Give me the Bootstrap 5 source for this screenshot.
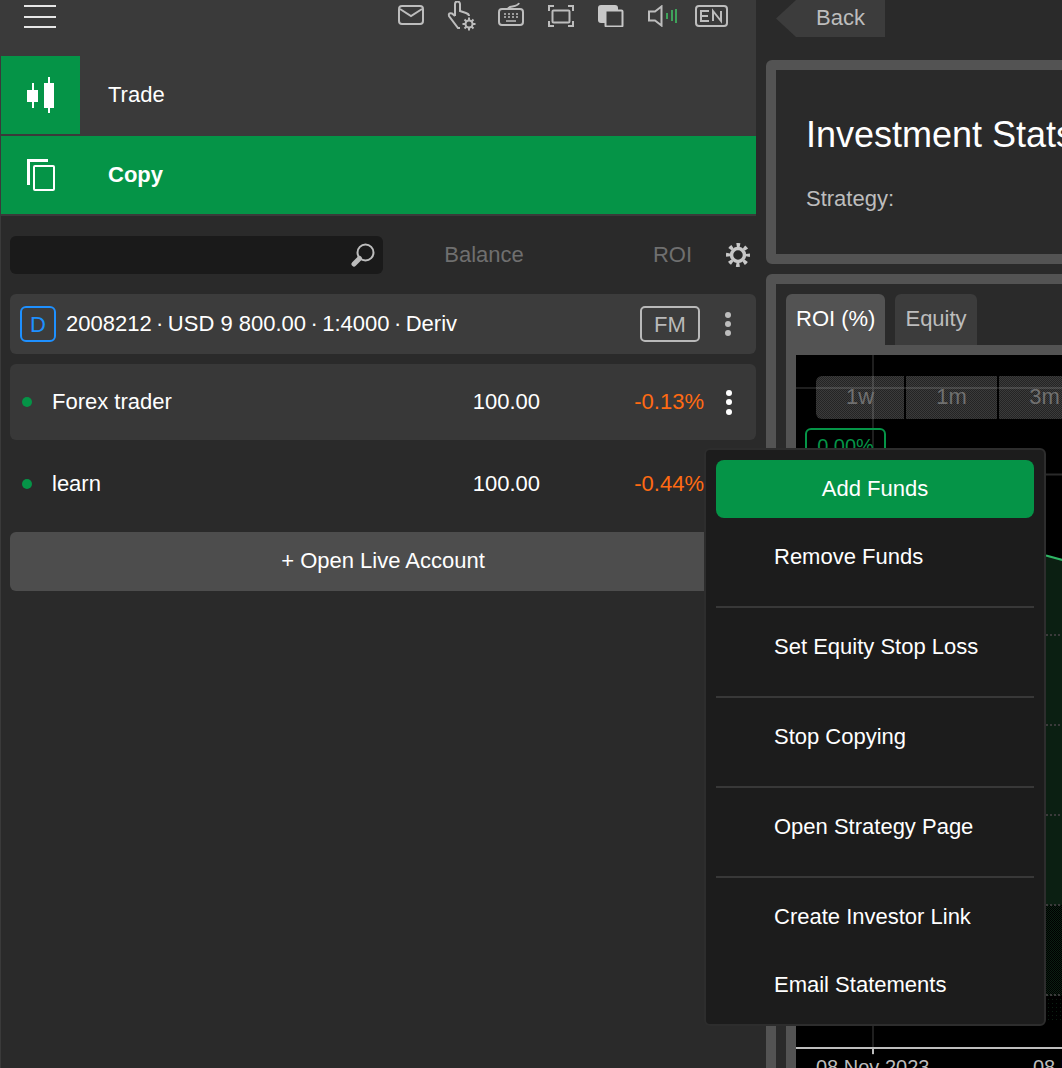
<!DOCTYPE html>
<html lang="en">
<head>
    <meta charset="UTF-8">
    <meta name="viewport" content="width=device-width, initial-scale=1.0">
    <title>Investment Stats</title>
    <link href="https://cdn.jsdelivr.net/npm/bootstrap@5.3.0/dist/css/bootstrap.min.css" rel="stylesheet">
    <style>
        html, body { height: 100%; }
        body {
            background: #2a2a2a;
            font-family: "Liberation Sans", Arial, sans-serif;
            font-size: 22px;
            color: #fff;
            overflow: hidden;
        }
        .app-shell { position: relative; height: 1068px; width: 1062px; overflow: hidden; }
        .lift-text { padding-bottom: 2px; }

        /* left column */
        .side-panel { width: 756px; flex: none; border-left: 1px solid #3a3a3a; }
        .top-bar { height: 56px; background: #3a3a3a; padding: 5px 28px 0 23px; }
        .burger { width: 32px; display: flex; flex-direction: column; gap: 8.5px; }
        .burger span { height: 2px; background: #e6e6e6; }
        .ico-hand { margin: -4px 0 0 23px; }
        .ico-keys { margin: -3px 0 0 22px; }
        .ico-screen { margin-left: 24px; }
        .ico-windows { margin-left: 24px; }
        .ico-sound { margin-left: 24px; }
        .ico-lang { margin-left: 18px; }
        .nav-row { height: 78px; background: #3a3a3a; font-size: 22px; }
        .nav-row.trade-row { height: 80px; padding-bottom: 2px; }
        .nav-ico { width: 79px; height: 78px; }
        .nav-label { margin-left: 28px; }
        .green-fill { background: #059447; }
        .copy-rule { height: 2px; background: #3a3a3a; }

        .tools-row { padding: 20px 5px 0 9px; height: 58px; }
        .search-box { width: 373px; height: 38px; background: #1a1a1a; border-radius: 6px; padding-right: 8px; }
        .col-head { color: #6f6f6f; }
        .head-balance { width: 202px; text-align: center; }
        .head-roi { width: 107px; text-align: right; }
        .tools-gear { margin-left: 34px; }

        .acc-row { margin: 20px 0 0 9px; height: 60px; background: #3c3c3c; border-radius: 6px; padding: 0 10px; }
        .acc-d { width: 36px; height: 36px; border: 2px solid #1e90ff; border-radius: 6px; color: #1e90ff; margin-right: 10px; }
        .acc-sep { margin: 0 -1.7px; }
        .acc-fm { width: 60px; height: 36px; border: 2px solid #b9b9b9; border-radius: 5px; color: #b9b9b9; }
        .kebab { display: flex; flex-direction: column; gap: 3.5px; width: 6px; }
        .kebab span { width: 6px; height: 6px; border-radius: 50%; background: #bdbdbd; }
        .kebab.bright span { background: #fff; }
        .acc-kebab { gap: 3px; margin-left: 25px; margin-right: 15px; }

        .copy-item { margin: 10px 0 0 9px; height: 76px; border-radius: 6px; padding: 0 0 0 12px; }
        .copy-item.active-item { background: #383838; }
        .copy-item + .copy-item { margin-top: 6px; }
        .status-dot { width: 10px; height: 10px; border-radius: 50%; background: #059447; margin-right: 20px; flex: none; }
        .item-name { width: 330px; }
        .item-bal { width: 158px; text-align: right; }
        .item-roi { width: 164px; text-align: right; color: #ff6a13; }
        .item-menu { margin-left: 22px; }

        .open-live { display: block; width: 746px; height: 59px; margin: 10px 0 0 9px; background: #4d4d4d; color: #fff; font-size: 22px; border: 0; border-radius: 6px; padding: 0 0 2px; }

        /* right column */
        .main-col { margin-left: 10px; width: 296px; flex: none; overflow: hidden; }
        .main-inner { width: 700px; }
        .back-tag { width: 109px; height: 37px; margin-left: 10px; background: #3c3c3c; color: #bdbdbd; padding-left: 40px; clip-path: polygon(20px 0, 100% 0, 100% 100%, 20px 100%, 0 50%); line-height: 35px; }
        .stat-box { border: 10px solid #535353; border-radius: 6px; background: #2a2a2a; }
        .stats-head { margin-top: 23px; height: 204px; padding: 0 30px; }
        .stats-head h1 { font-size: 36px; font-weight: 400; margin: 44px 0 0; line-height: 42px; }
        .strategy-label { color: #bdbdbd; margin-top: 26px; }
        .chart-box { margin-top: 10px; height: 900px; padding: 10px; }
        .tab-btn { height: 51px; padding: 0 10px; line-height: 50px; background: #3c3c3c; color: #bdbdbd; border-radius: 6px 6px 0 0; }
        .tab-btn.on { background: #535353; color: #fff; }
        .tab-gap { gap: 10px; }
        .plot-frame { border: 10px solid #535353; border-right: 0; height: 800px; background: #000; position: relative; }
        .plot-svg { position: absolute; left: 0; top: 0; }
        .range-row { position: absolute; left: 20px; top: 21px; gap: 2px; }
        .range-btn {
            width: 91px; height: 43px; color: #707070; text-align: center; line-height: 42px;
            background-image: conic-gradient(rgba(255,255,255,.23) 25%, rgba(255,255,255,.14) 0 50%, rgba(255,255,255,.23) 0 75%, rgba(255,255,255,.14) 0);
            background-size: 2px 2px;
        }
        .range-btn:first-child { width: 88px; border-radius: 6px 0 0 6px; }
        .pct-tag { position: absolute; left: 9px; top: 73px; width: 81px; height: 40px; border: 2px solid #059447; border-radius: 6px; color: #059447; font-size: 20px; text-align: center; line-height: 33px; }
        .date-tick { position: absolute; top: 697px; color: #bdbdbd; font-size: 20px; }
        .date-first { left: 20px; }
        .date-second { left: 237px; }

        /* popup menu */
        .acc-menu.dropdown-menu {
            left: 704px; top: 448px; width: 342px; height: 578px;
            background: #1c1c1c; border: 2px solid #2d2d2d; border-radius: 6px;
            padding: 10px; font-size: 22px; --bs-dropdown-min-width: 0;
        }
        .acc-menu .dropdown-item { height: 58px; padding: 0 0 0 58px; color: #fff; line-height: 58px; border-radius: 8px; }
        .acc-menu .dropdown-item.green-fill { background: #059447; padding: 0; text-align: center; margin-bottom: 10px; }
        .acc-menu .dropdown-divider { height: 2px; margin: 20px 0 10px; border: 0; background: #383838; opacity: 1; }
        .acc-menu .plain-next { margin-top: 10px; }
    </style>
</head>
<body>
<div class="app-shell d-flex">
    <div class="side-panel">
        <div class="top-bar d-flex justify-content-between">
            <div class="burger"><span></span><span></span><span></span></div>
            <div class="d-flex align-items-start">
                <svg width="26" height="20" viewBox="0 0 26 20" fill="none" stroke="#bdbdbd" stroke-width="2"><rect x="1" y="1" width="24" height="18" rx="3"/><path d="M2 4l11 7 11-7"/></svg>
                <svg class="ico-hand" width="29" height="30" viewBox="0 0 29 30" fill="none" stroke="#bdbdbd" stroke-width="2"><path d="M8 15V3a2.500 2.500 0 0 1 5 0V10l6 2q3 1 3 3"/><path d="M8 15L5 12.500q-4-1-3 2.500l9 12h2"/><circle cx="22" cy="23" r="3.500"/><path d="M22 16.500v3M22 26.500v3M15.500 23h3M25.500 23h3M17.500 18.500l2 2M24.500 25.500l2 2M17.500 27.500l2-2M24.500 20.500l2-2"/></svg>
                <svg class="ico-keys" width="26" height="24" viewBox="0 0 26 24" fill="none" stroke="#bdbdbd" stroke-width="2"><rect x="1" y="7" width="24" height="16" rx="3"/><path d="M10 7c0-4 9-1 11-6"/><path d="M6 12h2M10 12h2M14 12h2M18 12h2M6 15h2M10 15h2M14 15h2M18 15h2M8 19h10" stroke-width="1.500"/></svg>
                <svg class="ico-screen" width="26" height="22" viewBox="0 0 26 22" fill="none" stroke="#bdbdbd" stroke-width="2"><path d="M1 6V1h5M20 1h5v5M25 16v5h-5M6 21H1v-5"/><rect x="4.500" y="5.500" width="17" height="12" rx="1"/></svg>
                <svg class="ico-windows" width="26" height="22" viewBox="0 0 26 22" fill="none"><rect x="0" y="0" width="20" height="18" rx="3" fill="#c8c8c8"/><rect x="7.500" y="5.500" width="17" height="16" rx="1" fill="#3a3a3a" stroke="#c8c8c8" stroke-width="2"/></svg>
                <svg class="ico-sound" width="29" height="22" viewBox="0 0 29 22" fill="none"><path d="M1 6.500h6l6.500-5v19l-6.500-5H1z" stroke="#bdbdbd" stroke-width="2"/><path d="M19 8v6M24 5v11M28 4v14" stroke="#3fa35b" stroke-width="2"/></svg>
                <svg class="ico-lang" width="33" height="22" viewBox="0 0 33 22" fill="none" stroke="#bdbdbd" stroke-width="2"><rect x="1" y="1" width="31" height="20" rx="3"/><path d="M14 6H6v10h8M6 11h7M18 16V6l8 10V6"/></svg>
            </div>
        </div>
        <div class="nav-row trade-row d-flex">
            <div class="nav-ico green-fill d-flex align-items-center justify-content-center">
                <svg width="28" height="36" viewBox="0 0 28 36" fill="#fff"><rect x="5" y="6" width="2" height="25"/><rect x="0" y="13" width="11" height="12"/><rect x="21" y="0" width="2" height="36"/><rect x="17" y="6" width="10" height="25"/></svg>
            </div>
            <div class="nav-label lift-text d-flex align-items-center">Trade</div>
        </div>
        <div class="nav-row green-fill d-flex">
            <div class="nav-ico d-flex align-items-center justify-content-center">
                <svg width="28" height="32" viewBox="0 0 28 32" fill="none" stroke="#fff" stroke-width="2"><path d="M21 1.500H1.500V26" stroke-width="3"/><rect x="7" y="7" width="20" height="24" rx="1"/></svg>
            </div>
            <div class="nav-label lift-text d-flex align-items-center fw-bold">Copy</div>
        </div>
        <div class="copy-rule"></div>
        <div class="tools-row d-flex align-items-center">
            <div class="search-box d-flex align-items-center justify-content-end">
                <svg width="24" height="24" viewBox="0 0 24 24" fill="none"><circle cx="14.500" cy="9.500" r="8" stroke="#bdbdbd" stroke-width="2"/><path d="M8.500 15.500L3 21" stroke="#bdbdbd" stroke-width="5" stroke-linecap="round"/></svg>
            </div>
            <div class="col-head head-balance lift-text">Balance</div>
            <div class="col-head head-roi lift-text">ROI</div>
            <svg class="tools-gear" width="24" height="24" viewBox="0 0 24 24" fill="none"><circle cx="12" cy="12" r="6.500" stroke="#c8c8c8" stroke-width="3.500"/><circle cx="12" cy="12" r="10" stroke="#c8c8c8" stroke-width="4" stroke-dasharray="3.500 4.354" stroke-dashoffset="1.750"/></svg>
        </div>
        <div class="acc-row d-flex align-items-center">
            <div class="acc-d d-flex align-items-center justify-content-center">D</div>
            <div class="flex-grow-1 lift-text">2008212 <span class="acc-sep">·</span> USD 9 800.00 <span class="acc-sep">·</span> 1:4000 <span class="acc-sep">·</span> Deriv</div>
            <div class="acc-fm d-flex align-items-center justify-content-center">FM</div>
            <div class="kebab acc-kebab"><span></span><span></span><span></span></div>
        </div>
        <div class="copy-item active-item d-flex align-items-center">
            <div class="status-dot"></div>
            <div class="item-name lift-text">Forex trader</div>
            <div class="item-bal lift-text">100.00</div>
            <div class="item-roi lift-text">-0.13%</div>
            <div class="kebab bright item-menu"><span></span><span></span><span></span></div>
        </div>
        <div class="copy-item d-flex align-items-center">
            <div class="status-dot"></div>
            <div class="item-name lift-text">learn</div>
            <div class="item-bal lift-text">100.00</div>
            <div class="item-roi lift-text">-0.44%</div>
        </div>
        <button type="button" class="btn open-live">+ Open Live Account</button>
    </div>

    <div class="main-col">
        <div class="main-inner">
            <div class="back-tag">Back</div>
            <div class="stat-box stats-head">
                <h1>Investment Stats</h1>
                <div class="strategy-label">Strategy:</div>
            </div>
            <div class="stat-box chart-box">
                <div class="d-flex tab-gap">
                    <div class="tab-btn on">ROI (%)</div>
                    <div class="tab-btn">Equity</div>
                </div>
                <div class="plot-frame">
                    <svg class="plot-svg" width="670" height="780" viewBox="0 0 670 780">
                        <defs>
                            <pattern id="dither" width="2" height="2" patternUnits="userSpaceOnUse"><rect width="1" height="1" fill="#0b1f12"/><rect x="1" y="1" width="1" height="1" fill="#0b1f12"/></pattern>
                            <pattern id="ditherThin" width="4" height="4" patternUnits="userSpaceOnUse"><rect width="1" height="1" fill="#0b1f12"/></pattern>
                        </defs>
                        <path d="M250 200.500L270 206V550H250z" fill="#0b1f12"/>
                        <rect x="250" y="550" width="20" height="90" fill="url(#dither)"/>
                        <rect x="250" y="640" width="20" height="25" fill="url(#ditherThin)"/>
                        <path d="M250 280H270M250 370H270M250 460H270M250 550H270M250 640H270" stroke="#3a3a3a" stroke-width="2" stroke-dasharray="2 2"/>
                        <path d="M250 200.500L270 206" stroke="#2fb565" stroke-width="2" fill="none"/>
                        <path d="M250 119.500H270" stroke="#2a2a2a" stroke-width="2"/>
                        <path d="M77 0V700M0 33H270" stroke="#2a2a2a" stroke-width="1.500"/>
                        <path d="M0 693H670" stroke="#bdbdbd" stroke-width="2"/>
                        <path d="M77 693v6" stroke="#bdbdbd" stroke-width="2"/>
                    </svg>
                    <div class="range-row d-flex">
                        <div class="range-btn">1w</div>
                        <div class="range-btn">1m</div>
                        <div class="range-btn">3m</div>
                    </div>
                    <div class="pct-tag">0.00%</div>
                    <div class="date-tick date-first">08 Nov 2023</div>
                    <div class="date-tick date-second">08 Nov 2023</div>
                </div>
            </div>
        </div>
    </div>

    <div class="dropdown-menu show acc-menu">
        <a class="dropdown-item green-fill" href="#">Add Funds</a>
        <a class="dropdown-item" href="#">Remove Funds</a>
        <hr class="dropdown-divider">
        <a class="dropdown-item" href="#">Set Equity Stop Loss</a>
        <hr class="dropdown-divider">
        <a class="dropdown-item" href="#">Stop Copying</a>
        <hr class="dropdown-divider">
        <a class="dropdown-item" href="#">Open Strategy Page</a>
        <hr class="dropdown-divider">
        <a class="dropdown-item" href="#">Create Investor Link</a>
        <a class="dropdown-item plain-next" href="#">Email Statements</a>
    </div>
</div>
<script src="https://cdn.jsdelivr.net/npm/bootstrap@5.3.0/dist/js/bootstrap.bundle.min.js"></script>
</body>
</html>
